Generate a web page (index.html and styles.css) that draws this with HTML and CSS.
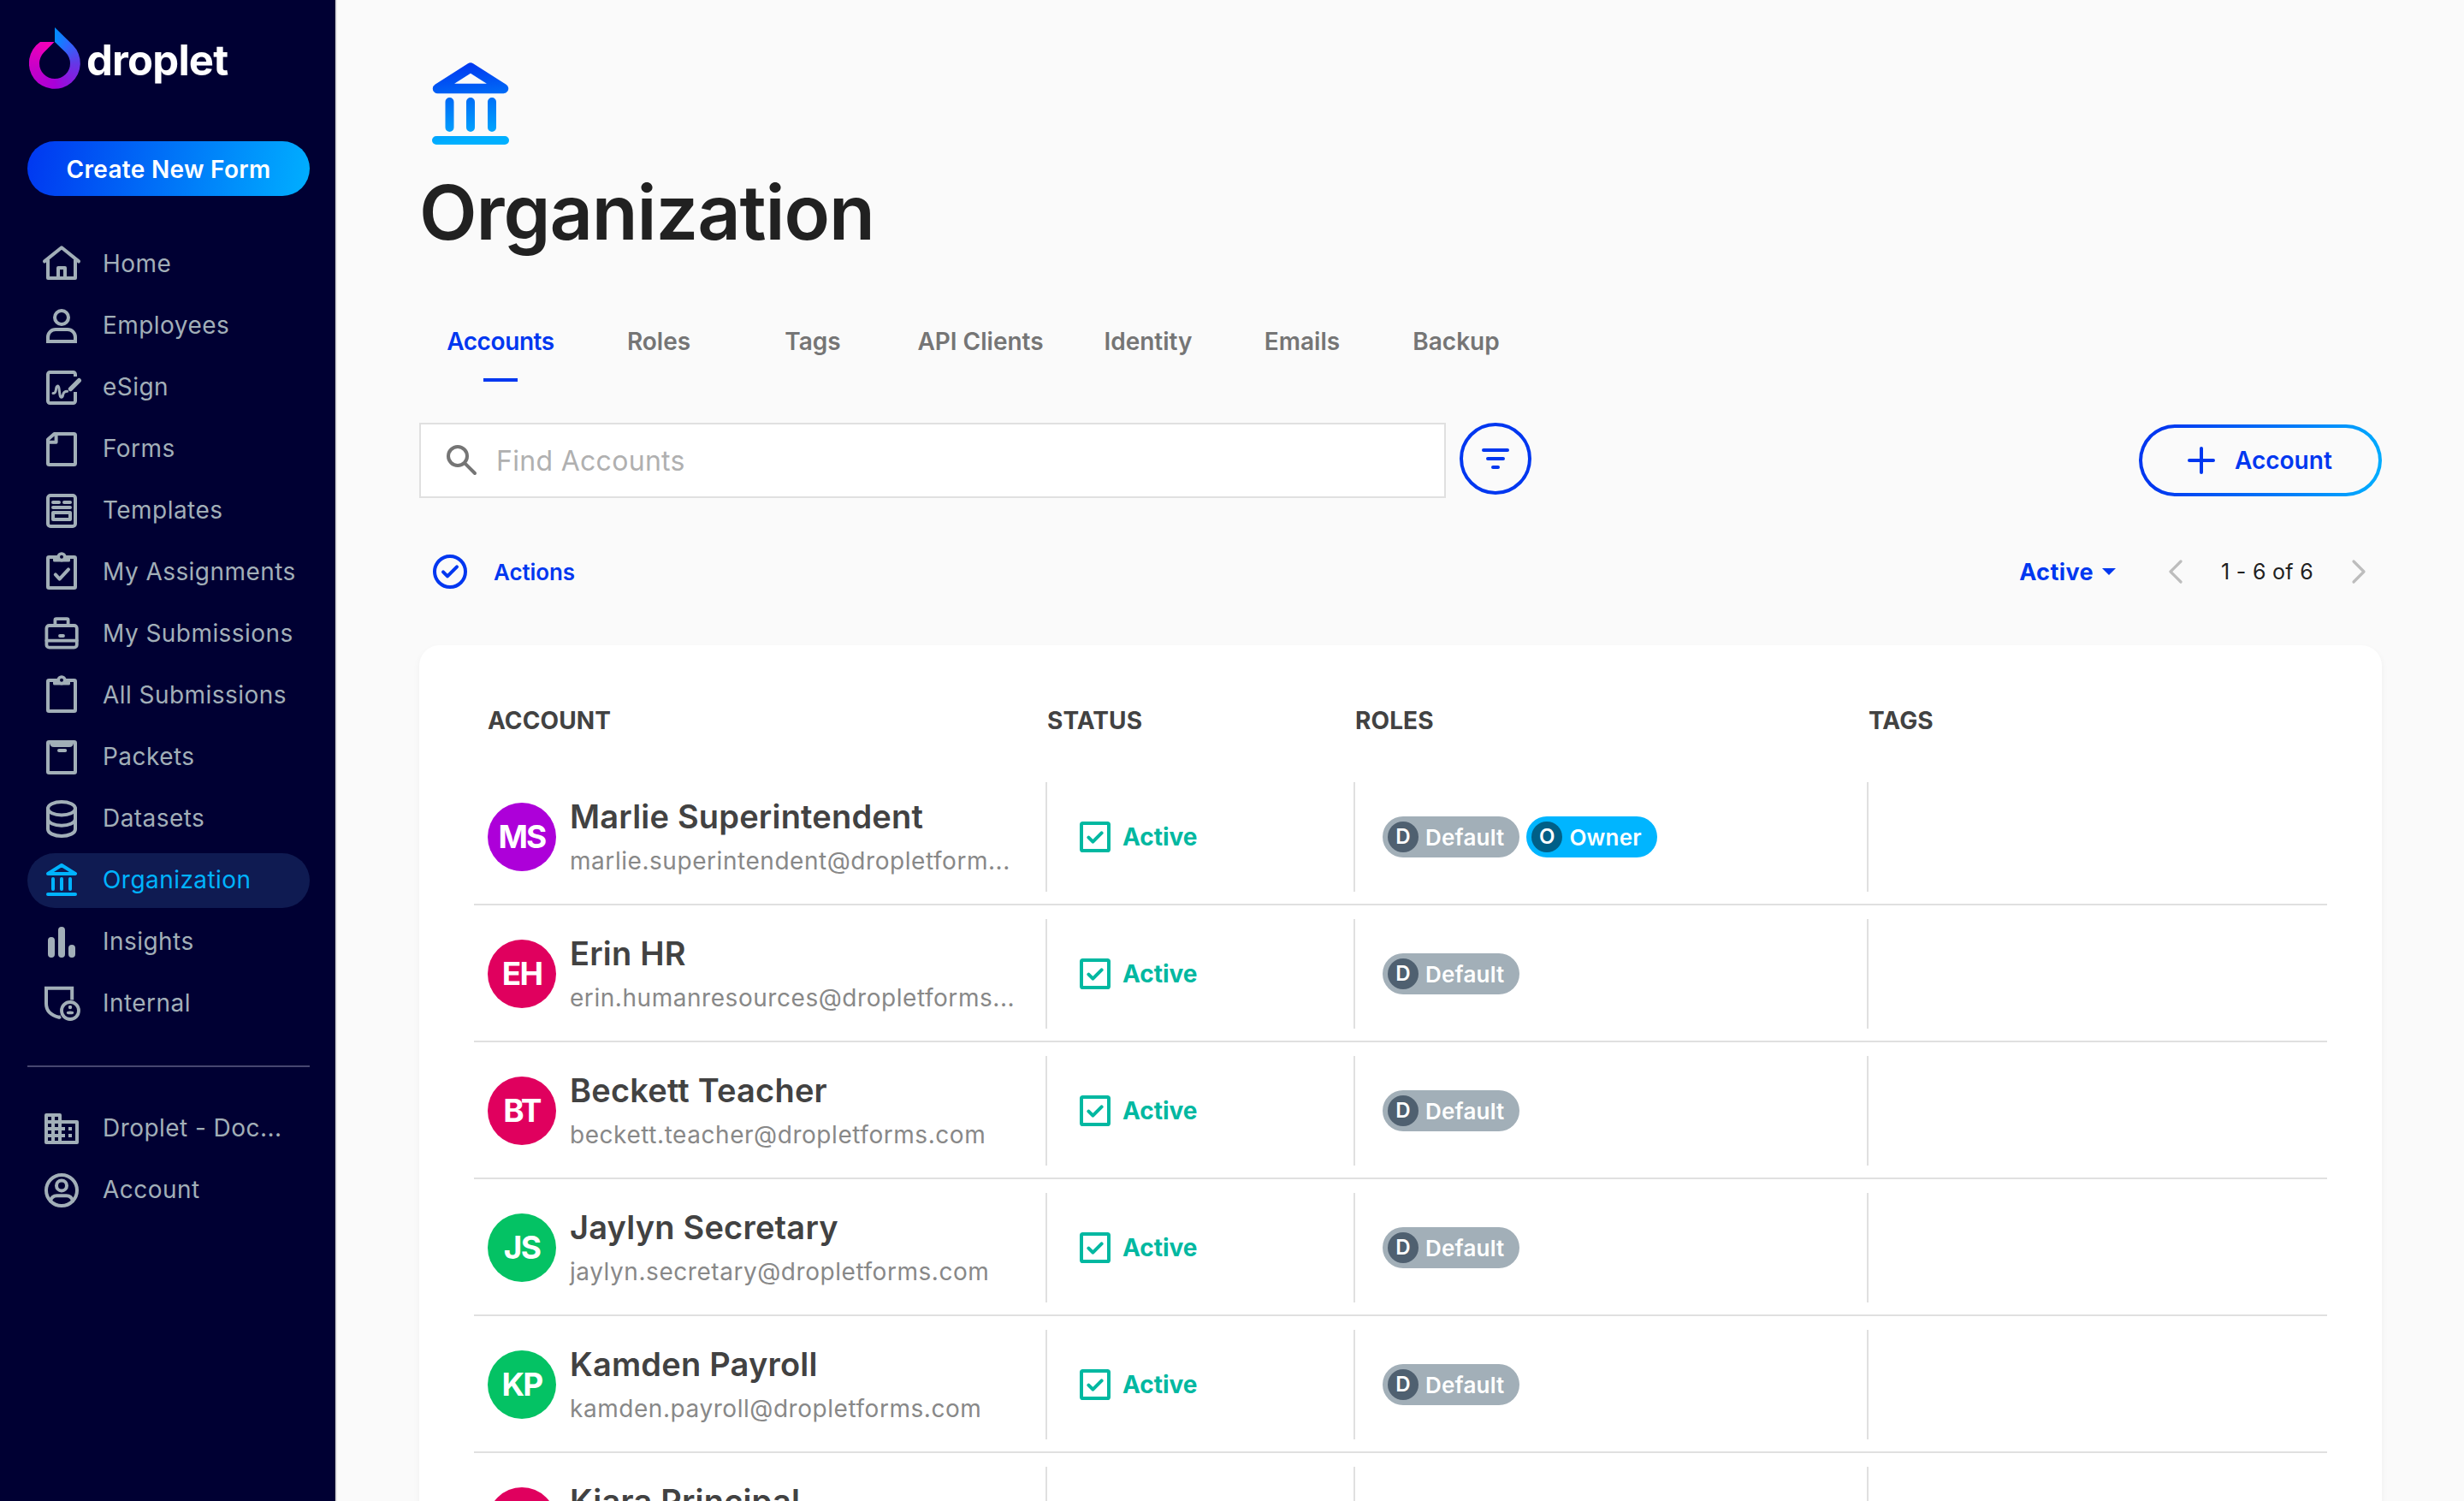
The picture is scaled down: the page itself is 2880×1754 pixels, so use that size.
FILE: index.html
```html
<!DOCTYPE html>
<html lang="en">
<head>
<meta charset="UTF-8" />
<meta name="viewport" content="width=device-width, initial-scale=1" />
<title>Organization | Droplet</title>
<link rel="stylesheet" href="styles.css">
</head>
<body>

<!-- shared icons -->
<svg class="sprite">
  <symbol id="bank" viewBox="0 0 24 24">
    <path d="M4 8l8-5 8 5z"/>
    <path d="M7 11v6M12 11v6M17 11v6M4 20h16"/>
  </symbol>
  <symbol id="clipboard" viewBox="0 0 24 24">
    <rect x="4" y="3" width="16" height="18" rx=".6"/>
    <path d="M7 3h10v2q0 .8-.8.8H7.800Q7 5.800 7 5z" fill="currentColor" stroke="none"/>
    <circle cx="12" cy="2.900" r="2.800" fill="currentColor" stroke="none"/>
    <circle cx="12" cy="2.900" r="1" fill="#000033" stroke="none"/>
  </symbol>
  <symbol id="check-box" viewBox="0 0 24 24">
    <rect x="4" y="4" width="16" height="16" rx=".8"/>
    <path d="M8.200 12.300l2.500 2.500 5.100-5.100"/>
  </symbol>
</svg>

<aside class="sidebar">
  <div class="logo">
    <div class="logo-mark"></div>
    <span class="logo-text">droplet</span>
  </div>

  <button class="create">Create New Form</button>

  <nav class="nav">
    <a class="nav-item">
      <svg viewBox="0 0 24 24"><path d="M2 10.200L12 2.100l10 8.100M4 9.500V20h16V9.500M10 20v-6h4v6"/></svg>
      <span>Home</span>
    </a>
    <a class="nav-item">
      <svg viewBox="0 0 24 24"><circle cx="12" cy="7" r="4"/><path d="M4 21v-2.500A4.500 4.500 0 0 1 8.500 14h7a4.500 4.500 0 0 1 4.500 4.500V21z" stroke-linejoin="miter"/></svg>
      <span>Employees</span>
    </a>
    <a class="nav-item">
      <svg viewBox="0 0 24 24"><path d="M20 5.500V4.200A1.200 1.200 0 0 0 18.800 3H5.200A1.200 1.200 0 0 0 4 4.200v15.600A1.200 1.200 0 0 0 5.200 21h13.600a1.200 1.200 0 0 0 1.200-1.200V14.500" stroke-linecap="butt"/><path d="M17.200 12.800l5-5" stroke-width="2.600"/><path d="M7 15.300c1 0 1.500-.5 1.700-2 .2-2.600 1.500-3 1.800-.8l.5 3.800c.3 1.800 1.500 1.800 1.800 0 .2-1.500.9-2.200 2.500-2.200" stroke-width="1.500"/></svg>
      <span>eSign</span>
    </a>
    <a class="nav-item">
      <svg viewBox="0 0 24 24"><path d="M7.700 3h11.500a.8.8 0 0 1 .8.800v16.400a.8.8 0 0 1-.8.800H4.800a.8.8 0 0 1-.8-.8V6.300zM4 7.900h4.800V3"/></svg>
      <span>Forms</span>
    </a>
    <a class="nav-item">
      <svg viewBox="0 0 24 24"><rect x="4" y="3" width="16" height="18" rx="1.500"/><path d="M7 7h3.500M13.500 7H17M7 10h10"/><rect x="7" y="13" width="10" height="4"/></svg>
      <span>Templates</span>
    </a>
    <a class="nav-item">
      <svg viewBox="0 0 24 24"><use href="#clipboard"/><path d="M8.400 13.200l2.400 2.600 5.200-5.600"/></svg>
      <span>My Assignments</span>
    </a>
    <a class="nav-item">
      <svg viewBox="0 0 24 24"><rect x="3.200" y="7" width="17.700" height="12.800" rx="1.600" stroke-width="1.900"/><path d="M8.200 7V3.800q0-.7.700-.7h6.200q.7 0 .7.700V7M3.200 15.800h17.700M11 13h2" stroke-width="1.900"/></svg>
      <span>My Submissions</span>
    </a>
    <a class="nav-item">
      <svg viewBox="0 0 24 24"><use href="#clipboard"/></svg>
      <span>All Submissions</span>
    </a>
    <a class="nav-item">
      <svg viewBox="0 0 24 24"><rect x="4" y="3" width="16" height="18" rx=".6"/><path d="M5 3h14q0 3-2.500 3h-9Q5 6 5 3z" fill="currentColor" stroke="none"/><path d="M10.500 8h3.600"/></svg>
      <span>Packets</span>
    </a>
    <a class="nav-item">
      <svg viewBox="0 0 24 24"><ellipse cx="12" cy="5.900" rx="8" ry="3.900"/><path d="M4 5.900V18c0 2.200 3.600 4 8 4s8-1.800 8-4V5.900M4 12c0 2.200 3.600 3.900 8 3.900s8-1.700 8-3.900"/></svg>
      <span>Datasets</span>
    </a>
    <a class="nav-item active">
      <svg viewBox="0 0 24 24"><use href="#bank"/></svg>
      <span>Organization</span>
    </a>
    <a class="nav-item">
      <svg viewBox="0 0 24 24"><path d="M6 11v8M12 5v14M18 15.500V19" stroke-width="4"/></svg>
      <span>Insights</span>
    </a>
    <a class="nav-item">
      <svg viewBox="0 0 24 24"><path d="M18.100 9.800V2.900H3V12c0 4 2.800 6.700 7.500 7.900l1-.4" stroke-linecap="butt" stroke-linejoin="miter"/><circle cx="17" cy="16" r="5" stroke-width="1.900"/><circle cx="17" cy="14" r="1.100" fill="currentColor" stroke="none"/><ellipse cx="17" cy="17.200" rx="2.100" ry=".95" fill="currentColor" stroke="none"/></svg>
      <span>Internal</span>
    </a>
  </nav>

  <hr>

  <nav class="nav">
    <a class="nav-item">
      <svg viewBox="0 0 24 24"><path d="M12 7V4q0-1-1-1H3Q2 3 2 4v16q0 1 1 1h18q1 0 1-1V8q0-1-1-1h-9zM6 19H4v-2h2v2zm0-4H4v-2h2v2zm0-4H4V9h2v2zm0-4H4V5h2v2zm4 12H8v-2h2v2zm0-4H8v-2h2v2zm0-4H8V9h2v2zm0-4H8V5h2v2zm10 12h-8v-2h2v-2h-2v-2h2v-2h-2V9h8v10zm-2-8h-2v2h2v-2zm0 4h-2v2h2v-2z" fill="currentColor" stroke="none"/></svg>
      <span>Droplet - Doc...</span>
    </a>
    <a class="nav-item">
      <svg viewBox="0 0 24 24"><circle cx="12" cy="12" r="9"/><circle cx="12" cy="9.200" r="3"/><path d="M5.500 18.200c.5-2.100 1.700-3.100 3.700-3.100h5.600c2 0 3.200 1 3.700 3.100"/></svg>
      <span>Account</span>
    </a>
  </nav>
</aside>

<main class="content">
  <svg class="page-icon" viewBox="0 0 24 24">
    <defs>
      <linearGradient id="blue" gradientUnits="userSpaceOnUse" x1="11" y1="2" x2="13" y2="20">
        <stop offset="0" stop-color="#0037f0"/>
        <stop offset="1" stop-color="#00b0ff"/>
      </linearGradient>
    </defs>
    <path d="M4.300 7.900L12 3l7.700 4.900z" stroke-width="2.300"/>
    <path d="M7.100 11v6M12 11v6M17 11v6M4 20h16"/>
  </svg>
  <h1>Organization</h1>

  <div class="tabs">
    <a class="tab selected">Accounts</a>
    <a class="tab">Roles</a>
    <a class="tab">Tags</a>
    <a class="tab">API Clients</a>
    <a class="tab">Identity</a>
    <a class="tab">Emails</a>
    <a class="tab">Backup</a>
  </div>

  <div class="toolbar">
    <div class="search">
      <svg viewBox="0 0 24 24"><circle cx="9.500" cy="9.500" r="5.500"/><path d="M14.300 14.300l5.200 5.200"/></svg>
      <input type="text" placeholder="Find Accounts" />
    </div>
    <button class="filter">
      <svg viewBox="0 0 24 24"><path d="M5 7h14M7.500 12h9M10.500 17h3"/></svg>
    </button>
    <button class="add">
      <svg viewBox="0 0 24 24"><path d="M12 5v14M5 12h14"/></svg>
      <span>Account</span>
    </button>
  </div>

  <div class="list-bar">
    <a class="actions">
      <svg viewBox="0 0 24 24"><circle cx="12" cy="12" r="9"/><path d="M8 12.200l2.500 2.500L16 9.200"/></svg>
      <span>Actions</span>
    </a>
    <span class="status-filter">Active</span>
    <svg class="chevron" viewBox="0 0 24 24"><path d="M15 6l-6 6 6 6"/></svg>
    <span class="range">1 - 6 of 6</span>
    <svg class="chevron" viewBox="0 0 24 24"><path d="M9 6l6 6-6 6"/></svg>
  </div>

  <section class="card">
    <div class="table-head">
      <span>ACCOUNT</span>
      <span>STATUS</span>
      <span>ROLES</span>
      <span>TAGS</span>
    </div>

    <div class="row">
      <div class="account">
        <div class="avatar purple">MS</div>
        <div class="person">
          <div class="name">Marlie Superintendent</div>
          <div class="email">marlie.superintendent@dropletform...</div>
        </div>
      </div>
      <div class="cell status"><svg><use href="#check-box"/></svg>Active</div>
      <div class="cell roles">
        <span class="chip"><b>D</b>Default</span>
        <span class="chip owner"><b>O</b>Owner</span>
      </div>
      <div class="cell"></div>
    </div>

    <div class="row">
      <div class="account">
        <div class="avatar pink">EH</div>
        <div class="person">
          <div class="name">Erin HR</div>
          <div class="email">erin.humanresources@dropletforms...</div>
        </div>
      </div>
      <div class="cell status"><svg><use href="#check-box"/></svg>Active</div>
      <div class="cell roles"><span class="chip"><b>D</b>Default</span></div>
      <div class="cell"></div>
    </div>

    <div class="row">
      <div class="account">
        <div class="avatar pink">BT</div>
        <div class="person">
          <div class="name">Beckett Teacher</div>
          <div class="email">beckett.teacher@dropletforms.com</div>
        </div>
      </div>
      <div class="cell status"><svg><use href="#check-box"/></svg>Active</div>
      <div class="cell roles"><span class="chip"><b>D</b>Default</span></div>
      <div class="cell"></div>
    </div>

    <div class="row">
      <div class="account">
        <div class="avatar green">JS</div>
        <div class="person">
          <div class="name">Jaylyn Secretary</div>
          <div class="email">jaylyn.secretary@dropletforms.com</div>
        </div>
      </div>
      <div class="cell status"><svg><use href="#check-box"/></svg>Active</div>
      <div class="cell roles"><span class="chip"><b>D</b>Default</span></div>
      <div class="cell"></div>
    </div>

    <div class="row">
      <div class="account">
        <div class="avatar green">KP</div>
        <div class="person">
          <div class="name">Kamden Payroll</div>
          <div class="email">kamden.payroll@dropletforms.com</div>
        </div>
      </div>
      <div class="cell status"><svg><use href="#check-box"/></svg>Active</div>
      <div class="cell roles"><span class="chip"><b>D</b>Default</span></div>
      <div class="cell"></div>
    </div>

    <div class="row">
      <div class="account">
        <div class="avatar pink">KP</div>
        <div class="person">
          <div class="name">Kiara Principal</div>
          <div class="email">kiara.principal@dropletforms.com</div>
        </div>
      </div>
      <div class="cell status"><svg><use href="#check-box"/></svg>Active</div>
      <div class="cell roles"><span class="chip"><b>D</b>Default</span></div>
      <div class="cell"></div>
    </div>
  </section>
</main>

</body>
</html>
```
FILE: styles.css
```css
* {
  box-sizing: border-box;
}
body {
  display: flex;
  height: 100vh;
  margin: 0;
  overflow: hidden;
  background: #fafafa;
  color: #212121;
  font-family: Inter, "Liberation Sans", sans-serif;
  font-size: 28px;
}
svg {
  flex: none;
  fill: none;
  stroke: currentColor;
  stroke-width: 2;
  stroke-linecap: round;
  stroke-linejoin: round;
}
button {
  font-family: inherit;
  cursor: pointer;
}
.sprite {
  display: none;
}

/* sidebar */
.sidebar {
  flex: none;
  width: 394px;
  padding: 32px 30px 0 32px;
  background: #000033;
  border-right: 2px solid #e0e0e0;
}
.logo {
  display: flex;
  gap: 7px;
  height: 72px;
  padding-left: 2px;
}
.logo-mark {
  width: 60px;
  height: 72px;
  background: conic-gradient(from 0deg at 30px 42px, #008cff 0, #2a6aff 9%, #6438e6 25%, #a800d8 50%, #c800c8 72%, #f500b8 95%);
  clip-path: path("M30 0L51.2 20.8A30 30 0 1 1 13 17L29.5 17 17.3 29.3A18 18 0 1 0 42.7 29.3L30 17Z");
}
.logo-text {
  color: white;
  font-size: 49px;
  font-weight: 700;
  line-height: 78px;
  letter-spacing: -0.8px;
}
.create {
  display: block;
  width: 330px;
  height: 64px;
  margin: 61px 0 48px;
  padding: 1px 0 0;
  border: none;
  border-radius: 32px;
  background: linear-gradient(100deg, #0037f0, #00afff);
  color: white;
  font-size: 28px;
  font-weight: 600;
  letter-spacing: 0.3px;
}
.nav {
  display: flex;
  flex-direction: column;
  gap: 8px;
}
.nav-item {
  display: flex;
  align-items: center;
  gap: 24px;
  width: 330px;
  height: 64px;
  padding-left: 16px;
  border-radius: 32px;
  color: #a2afb8;
  letter-spacing: 0.45px;
}
.nav-item svg {
  width: 48px;
  height: 48px;
}
.nav-item span {
  padding-bottom: 2px;
  white-space: nowrap;
}
.nav-item.active {
  background: #0f1b52;
  color: #00b3ff;
}
.sidebar hr {
  width: 330px;
  height: 2px;
  margin: 40px 0;
  border: none;
  background: #474770;
}

/* page header */
.content {
  flex: 1;
  padding: 64px 96px 0;
}
.page-icon {
  display: block;
  width: 120px;
  height: 120px;
  stroke: url(#blue);
}
h1 {
  margin: 16px 0 56px;
  font-size: 88px;
  font-weight: 600;
  line-height: 96px;
  letter-spacing: -1.1px;
}
.tabs {
  display: grid;
  grid-template-columns: 190px 180px 180px 212px 180px 180px 180px;
  height: 94px;
}
.tab {
  position: relative;
  color: #757575;
  font-weight: 600;
  line-height: 94px;
  text-align: center;
}
.tab.selected {
  color: #0037f0;
  letter-spacing: -0.4px;
}
.tab.selected::after {
  content: "";
  position: absolute;
  left: 75px;
  bottom: 0;
  width: 40px;
  height: 4px;
  background: #0037f0;
}

/* search and buttons */
.toolbar {
  display: flex;
  align-items: flex-start;
  margin-top: 48px;
}
.search {
  display: flex;
  align-items: center;
  gap: 16px;
  width: 1200px;
  height: 88px;
  padding: 0 24px;
  background: white;
  border: 2px solid #e0e0e0;
}
.search svg {
  width: 48px;
  height: 48px;
  color: #757575;
}
.search input {
  flex: 1;
  padding: 0;
  border: none;
  outline: none;
  font-family: inherit;
  font-size: 32px;
  letter-spacing: 0.3px;
}
.search input::placeholder {
  color: #b0b0b0;
}
.filter {
  display: flex;
  align-items: center;
  justify-content: center;
  width: 84px;
  height: 84px;
  margin-left: 16px;
  padding: 0;
  border: 4px solid #0037f0;
  border-radius: 50%;
  background: none;
  color: #0037f0;
}
.filter svg {
  width: 48px;
  height: 48px;
}
.add {
  display: flex;
  align-items: center;
  gap: 15px;
  width: 284px;
  height: 84px;
  margin: 2px 0 0 auto;
  padding: 0 0 0 45px;
  border: 4px solid transparent;
  border-radius: 42px;
  background: linear-gradient(#fafafa, #fafafa) padding-box, linear-gradient(100deg, #0037f0 10%, #00afff) border-box;
  color: #0037f0;
  font-size: 28px;
  font-weight: 600;
}
.add svg {
  width: 48px;
  height: 48px;
}

.list-bar {
  display: flex;
  align-items: center;
  height: 172px;
  padding: 0 3px 0 12px;
}
.actions {
  display: flex;
  align-items: center;
  gap: 27px;
  margin-right: auto;
  color: #0037f0;
  font-size: 26px;
  font-weight: 600;
  letter-spacing: -0.1px;
}
.actions svg {
  width: 48px;
  height: 48px;
}
.status-filter {
  display: flex;
  align-items: center;
  gap: 10px;
  margin-right: 46px;
  color: #0037f0;
  font-size: 27px;
  font-weight: 700;
  letter-spacing: 0.4px;
}
.status-filter::after {
  content: "";
  border: 8px solid transparent;
  border-top-color: #0037f0;
  border-bottom: 0;
}
.chevron {
  width: 48px;
  height: 48px;
  color: #bdbdbd;
  stroke-width: 1.6;
}
.range {
  width: 166px;
  padding-bottom: 1px;
  font-size: 25px;
  text-align: center;
  letter-spacing: 0.3px;
}

/* accounts table */
.card {
  padding: 32px 64px;
  background: white;
  border-radius: 24px;
  box-shadow: 0 4px 8px rgba(0, 0, 0, 0.05);
}
.table-head,
.row {
  display: grid;
  grid-template-columns: 668px 360px 600px 1fr;
}
.table-head {
  align-items: center;
  height: 112px;
  color: #424242;
  font-weight: 700;
  letter-spacing: 0.1px;
}
.table-head span {
  padding-left: 2px;
}
.table-head span:first-child {
  padding-left: 16px;
}
.row {
  height: 160px;
  padding: 16px 0 14px;
  border-bottom: 2px solid #e0e0e0;
}
.row > div {
  display: flex;
  align-items: center;
}
.account {
  gap: 16px;
  padding-left: 16px;
}
.avatar {
  flex: none;
  width: 80px;
  height: 80px;
  border-radius: 50%;
  color: white;
  font-size: 37px;
  font-weight: 700;
  line-height: 80px;
  text-align: center;
  letter-spacing: -1.8px;
}
.purple {
  background: #ad00d9;
}
.pink {
  background: #e0005e;
}
.green {
  background: #04c264;
}
.name {
  color: #424242;
  font-size: 38px;
  font-weight: 600;
  line-height: 56px;
  letter-spacing: 0.2px;
}
.email {
  color: #888;
  line-height: 48px;
  letter-spacing: 0.55px;
  white-space: nowrap;
}
.cell {
  border-left: 2px solid #e0e0e0;
}
.status {
  gap: 8px;
  padding-left: 32px;
  color: #00b8a1;
  font-weight: 700;
}
.status svg {
  width: 48px;
  height: 48px;
}
.roles {
  gap: 8px;
  padding-left: 32px;
}
.chip {
  display: flex;
  align-items: center;
  gap: 8px;
  height: 48px;
  padding: 0 18px 0 6px;
  border-radius: 24px;
  background: #a2afb8;
  color: white;
  font-size: 26px;
  font-weight: 600;
  letter-spacing: 0.2px;
}
.chip b {
  width: 36px;
  height: 36px;
  border-radius: 50%;
  background: #4f6070;
  font-size: 24px;
  font-weight: 600;
  line-height: 36px;
  text-align: center;
}
.chip.owner {
  background: #00b5ff;
}
.chip.owner b {
  background: #005f87;
}
```
